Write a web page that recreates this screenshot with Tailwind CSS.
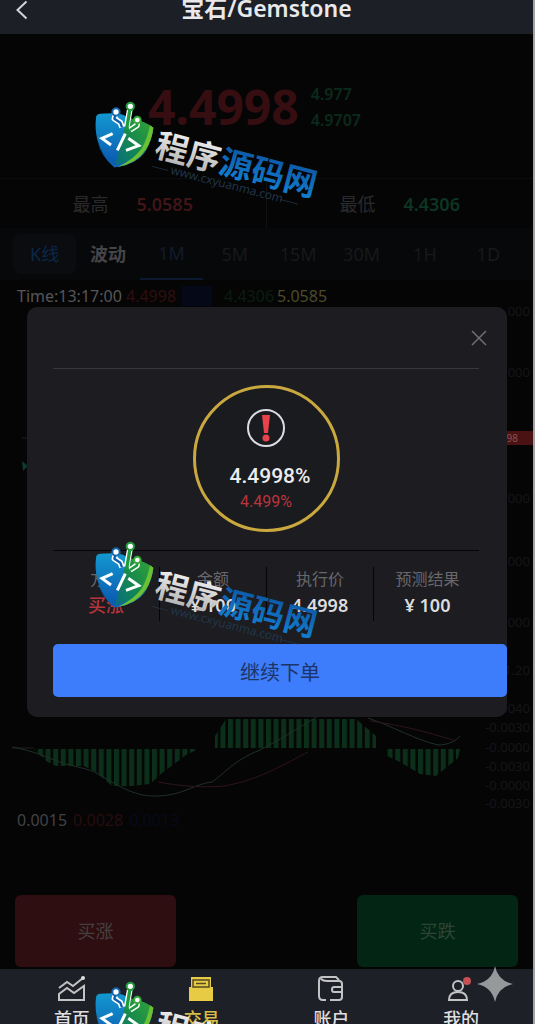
<!DOCTYPE html>
<html lang="zh-CN">
<head>
    <meta charset="UTF-8">
    <meta name="viewport" content="width=device-width, initial-scale=1.0">
    <title>宝石/Gemstone</title>
    <script src="https://cdn.jsdelivr.net/npm/@tailwindcss/browser@4"></script>
    <style>
        body { font-family: "Noto Sans", "Noto Sans CJK SC", sans-serif; }
    </style>
</head>
<body class="bg-[#050506]">
    <div class="relative flex h-screen flex-col overflow-hidden border-r-2 border-[#a3a3a3] bg-[#050506]">

        <!-- Header -->
        <header class="grid h-[34px] shrink-0 grid-cols-[44px_1fr_44px] bg-[#1d1f26]">
            <button type="button" aria-label="返回" class="flex h-5 items-center pl-4">
                <svg class="h-5 w-3" viewBox="0 0 12 20" fill="none" stroke="#d4d4d6" stroke-width="2"><path d="M10.500 1.500 1.500 10l9 8.500"/></svg>
            </button>
            <h1 class="text-center text-[23px] leading-4 font-semibold text-[#e9e9eb]">宝石/Gemstone</h1>
        </header>

        <main class="flex flex-1 flex-col">
            <!-- Price -->
            <section class="flex h-[145px] items-center justify-center gap-3 border-b border-[#0c0c0e] pt-0.5 pr-6">
                <span class="text-[48px] leading-none font-bold text-[#360e11]">4.4998</span>
                <div class="flex flex-col text-base leading-[26px] font-semibold text-[#0b2a1b]">
                    <span>4.977</span>
                    <span>4.9707</span>
                </div>
            </section>

            <section class="grid h-[49px] grid-cols-2 items-center text-lg text-[#2a2a2c]">
                <p class="flex h-full items-center justify-center gap-7 border-r border-[#101012]"><span>最高</span><b class="font-semibold text-[#401518]">5.0585</b></p>
                <p class="flex items-center justify-center gap-7"><span>最低</span><b class="font-semibold text-[#0d3524]">4.4306</b></p>
            </section>

            <!-- Tabs -->
            <nav class="grid h-[52px] grid-cols-8 bg-[#07080a] px-[13px] text-lg text-[#18191b]">
                <button type="button" class="my-1.5 rounded-lg bg-[#0a0c0f] text-[#0c2748]">K线</button>
                <button type="button" class="font-semibold text-[#454547]">波动</button>
                <button type="button" class="border-b-2 border-[#0b182f] text-[#131b2a]">1M</button>
                <button type="button">5M</button>
                <button type="button">15M</button>
                <button type="button">30M</button>
                <button type="button">1H</button>
                <button type="button">1D</button>
            </nav>

            <p class="flex h-[26px] items-end px-[17px] text-base leading-5">
                <span class="w-[109px] text-[#565658]">Time:13:17:00</span>
                <span class="w-[56px] text-[#300e10]">4.4998</span>
                <span class="mr-3 w-[30px] bg-[#050816]">&nbsp;</span>
                <span class="w-[53px] text-[#0a1e11]">4.4306</span>
                <span class="text-[#4c4a2a]">5.0585</span>
            </p>

            <!-- Chart -->
            <svg class="h-[502px] w-full shrink-0" viewBox="0 0 533 502" preserveAspectRatio="none">
                <defs>
                    <pattern id="bars" width="7.600" height="40" patternUnits="userSpaceOnUse"><rect width="5" height="40" fill="#0b2f19"/></pattern>
                </defs>
                <path d="M22 155l6 5-5 5z" fill="#0b3a30"/>
                <path d="M22 132h5M12 442h22" stroke="#1d1f20"/>
                <polygon points="34,443 198,443 186,449 162,467 150,478 132,480 112,480 96,466 84,460 56,460 46,455" fill="url(#bars)"/>
                <polygon points="215,442 215,430 226,413 356,413 376,430 376,442" fill="url(#bars)"/>
                <polygon points="387,443 460,443 458,452 436,470 420,468 400,456 387,450" fill="url(#bars)"/>
                <path d="M12 441c22 4 34 10 48 15s28 6 38 12c24 14 38 23 60 22 26-1 36-12 54-14 12-8 22-22 48-32 20-10 38-22 58-34M368 412c24 8 48 22 70 27 10 0 18-4 22-9" fill="none" stroke="#1e3029"/>
                <path d="M158 476c22 4 44 6 66 4 36-6 64-24 84-34M370 415c30 4 54 10 86 20" fill="none" stroke="#2d1517"/>
                <rect x="507" y="125" width="26" height="14" fill="#4a1213"/>
                <g font-size="13" fill="#151517" text-anchor="end">
                    <text x="530" y="10">.000</text>
                    <text x="530" y="71">.000</text>
                    <text x="518" y="136" font-size="10" fill="#8a5052">98</text>
                    <text x="530" y="197">.000</text>
                    <text x="530" y="260">.000</text>
                    <text x="530" y="321">.000</text>
                    <text x="530" y="369">1.20</text>
                    <text x="530" y="407">.0040</text>
                    <text x="530" y="426">-0.0030</text>
                    <text x="530" y="446">-0.0000</text>
                    <text x="530" y="465">-0.0030</text>
                    <text x="530" y="484">-0.0000</text>
                    <text x="530" y="502">-0.0030</text>
                </g>
            </svg>

            <p class="flex h-6 items-center gap-[6px] px-[17px] text-base">
                <span class="text-[#424244]">0.0015</span>
                <span class="text-[#280d0e]">0.0028</span>
                <span class="text-[#060a1a]">0.0013</span>
            </p>

            <div class="flex flex-1 items-end justify-between px-[15px] pb-0.5 text-lg text-[#45403f]">
                <button type="button" class="h-[72px] w-[161px] rounded-md bg-[#2f0e11]">买涨</button>
                <button type="button" class="h-[72px] w-[161px] rounded-md bg-[#022514] text-[#2d4537]">买跌</button>
            </div>
        </main>

        <!-- Bottom navigation -->
        <nav class="grid h-[55px] shrink-0 grid-cols-4 overflow-hidden bg-[#1e2027] px-[7px] text-lg leading-5 text-[#dedee0]">
            <a href="#" class="flex flex-col items-center gap-1.5 pt-1.5">
                <svg class="h-7 w-8 shrink-0" viewBox="0 0 32 28" fill="none" stroke="#c3c3c5" stroke-width="2"><path d="M3 13l8-6 6 4L27 3M3 25v-6l8-6 7 5 10-7v14z"/><circle cx="27" cy="3" r="2" fill="#dedee0" stroke="none"/></svg>
                <span class="font-medium">首页</span>
            </a>
            <a href="#" class="flex flex-col items-center gap-1.5 pt-1.5 text-[#d8bf46]">
                <svg class="h-7 w-8 shrink-0" viewBox="0 0 32 28"><path d="M3 12h2V2h20v10h2v14H3z" fill="#e8cb45"/><path d="M7 5h16v7H7zM10 8.500h10" fill="none" stroke="#544b24" stroke-width="1.500"/></svg>
                <span class="font-medium">交易</span>
            </a>
            <a href="#" class="flex flex-col items-center gap-1.5 pt-1.5">
                <svg class="h-7 w-8 shrink-0" viewBox="0 0 32 28" fill="none" stroke="#c3c3c5" stroke-width="2"><path d="M11 25H8q-4 0-4-4V6q0-4 4-4h13l3 3M6 4q2 2 6 2h12q3 0 3 3v13q0 3-3 3h-9M27 12h-8q-2 0-2 2.500t2 2.500h8"/></svg>
                <span class="font-medium">账户</span>
            </a>
            <a href="#" class="flex flex-col items-center gap-1.5 pt-1.5">
                <svg class="h-7 w-8 shrink-0" viewBox="0 0 32 28" fill="none" stroke="#c3c3c5" stroke-width="2"><circle cx="13" cy="11" r="5"/><path d="M4 25c0-6 4-8 9-8s9 2 9 8z"/><circle cx="22" cy="6" r="4" fill="#c55055" stroke="none"/></svg>
                <span class="font-medium">我的</span>
            </a>
        </nav>

        <!-- Order dialog -->
        <div role="dialog" aria-label="下单结果" class="absolute top-[307px] right-[26px] left-[27px] rounded-[10px] bg-[#1c1c21] pb-5 pl-[26px]">
            <div class="mr-7 flex h-[62px] items-center justify-end border-b border-[#38383c]">
                <button type="button" aria-label="关闭" class="-mr-2 p-0">
                    <svg class="size-4" viewBox="0 0 16 16" stroke="#707073" stroke-width="1.500"><path d="M1 1l14 14M15 1 1 15"/></svg>
                </button>
            </div>
            <div class="mr-7 flex justify-center border-b border-[#050507] pt-4 pb-[18px]">
                <div class="flex size-[147px] flex-col items-center rounded-full border-3 border-[#c9a83f] bg-[#1a1b1f] pt-5">
                    <svg class="size-10" viewBox="0 0 40 40"><circle cx="20" cy="20" r="18" fill="none" stroke="#dcdce4" stroke-width="2"/><path d="M16 7h8l-2 18h-4z" fill="#e8434b"/><circle cx="20" cy="30" r="3.500" fill="#e8434b"/></svg>
                    <strong class="mt-3.5 pl-2 font-[Roboto] text-[21px] leading-7 font-medium text-[#ececee]">4.4998%</strong>
                    <span class="font-[Roboto] text-base leading-6 text-[#b9343c]">4.499%</span>
                </div>
            </div>
            <dl class="mt-4 mr-[26px] grid grid-cols-4 divide-x divide-[#050507] text-center leading-[26px]">
                <div class="h-[54px]"><dt class="text-base text-[#68686b]">方向</dt><dd class="text-lg font-medium text-[#b8343b]">买涨</dd></div>
                <div class="h-[54px]"><dt class="text-base text-[#68686b]">金额</dt><dd class="text-lg font-semibold text-[#dcdcde]">¥ 100</dd></div>
                <div class="h-[54px]"><dt class="text-base text-[#68686b]">执行价</dt><dd class="text-lg font-semibold text-[#dcdcde]">4.4998</dd></div>
                <div class="h-[54px]"><dt class="text-base text-[#68686b]">预测结果</dt><dd class="text-lg font-semibold text-[#dcdcde]">¥ 100</dd></div>
            </dl>
            <button type="button" class="mt-[23px] h-[53px] w-full rounded-[5px] bg-[#3d7cfa] pt-1 text-xl text-[#1c3568]">继续下单</button>
        </div>

        <!-- Watermarks -->
        <svg class="pointer-events-none absolute top-[90px] left-20 h-[130px] w-[260px]" viewBox="0 0 780 390">
            <defs>
                <linearGradient id="left" x1="0" y1="0" x2="0" y2="1"><stop offset="0" stop-color="#1398cf"/><stop offset="1" stop-color="#0a55ae"/></linearGradient>
                <linearGradient id="right" x1="0" y1="1" x2="1" y2="0"><stop offset="0" stop-color="#066b88"/><stop offset="0.500" stop-color="#168a4c"/><stop offset="1" stop-color="#38a436"/></linearGradient>
                <linearGradient id="silver" x1="0" y1="0" x2="0" y2="1"><stop offset="0" stop-color="#ffffff"/><stop offset="1" stop-color="#a9a9a9"/></linearGradient>
                <linearGradient id="blue" x1="0" y1="0" x2="0" y2="1"><stop offset="0" stop-color="#0b4f9c"/><stop offset="1" stop-color="#1585d6"/></linearGradient>
                <g id="mark">
                    <path d="M48 84q0-12 12-13l35-1q28 0 45 10 15 10 30 10 25 6 50 23-4 36-22 68-27 43-95 51-38-34-51-83-8-34-4-65z" fill="url(#left)"/>
                    <path d="M142 78q15 11 30 12 25 6 48 23-4 36-22 68-27 43-95 51l22-80z" fill="url(#right)"/>
                    <path d="M51 152q14 49 52 72 62-8 88-48l7 5q-27 43-95 51-42-36-52-80z" fill="#0d63b4"/>
                    <path d="M220 113q-5 38-24 68-27 41-82 49 50-23 72-56 17-31 24-68z" fill="#6cc034"/>
                    <g fill="none" stroke="#fff" stroke-linejoin="round">
                        <path d="M108 68l-5 18 18 12 5 14M151 50l-11 60M172 90l-1 16-21 14" stroke-width="17"/>
                        <path d="M108 68l-5 18 18 12 5 14" stroke="#0b5eac" stroke-width="7"/>
                        <path d="M151 50l-11 66" stroke="#20983e" stroke-width="10"/>
                        <path d="M172 90l-1 16-21 14" stroke="#20983e" stroke-width="8"/>
                        <path d="M98 131L66 145l27 20M136 131l-24 50M145 145l31 22-38 14" stroke-width="9" stroke-linejoin="miter"/>
                    </g>
                    <g fill="#fff" stroke-width="6">
                        <circle cx="108" cy="66" r="11" stroke="#1664ae"/>
                        <circle cx="151" cy="49" r="11" stroke="#229b3f"/>
                        <circle cx="172" cy="90" r="10" stroke="#38a73a"/>
                    </g>
                    <g transform="translate(220 197) rotate(14.500)">
                        <text font-size="99" font-weight="700" font-family="Noto Sans CJK SC, sans-serif"><tspan fill="url(#silver)">程序</tspan><tspan fill="url(#blue)">源码网</tspan></text>
                        <text x="62" y="40" font-size="36" fill="#22384b" font-family="Open Sans, sans-serif">www.cxyuanma.com</text>
                        <path d="M5 32h48M402 32h54" stroke="#22384b" stroke-width="2"/>
                    </g>
                </g>
            </defs>
            <use href="#mark"/>
        </svg>
        <svg class="pointer-events-none absolute top-[530px] left-20 h-[130px] w-[260px]" viewBox="0 0 780 390"><use href="#mark"/></svg>
        <svg class="pointer-events-none absolute top-[970px] left-20 h-[130px] w-[260px]" viewBox="0 0 780 390"><use href="#mark"/></svg>

        <svg class="pointer-events-none absolute top-[966px] right-5 size-9" viewBox="0 0 36 36"><path d="M18 0Q21 15 36 18 21 21 18 36 15 21 0 18 15 15 18 0z" fill="#96989c"/></svg>
    </div>
</body>
</html>
